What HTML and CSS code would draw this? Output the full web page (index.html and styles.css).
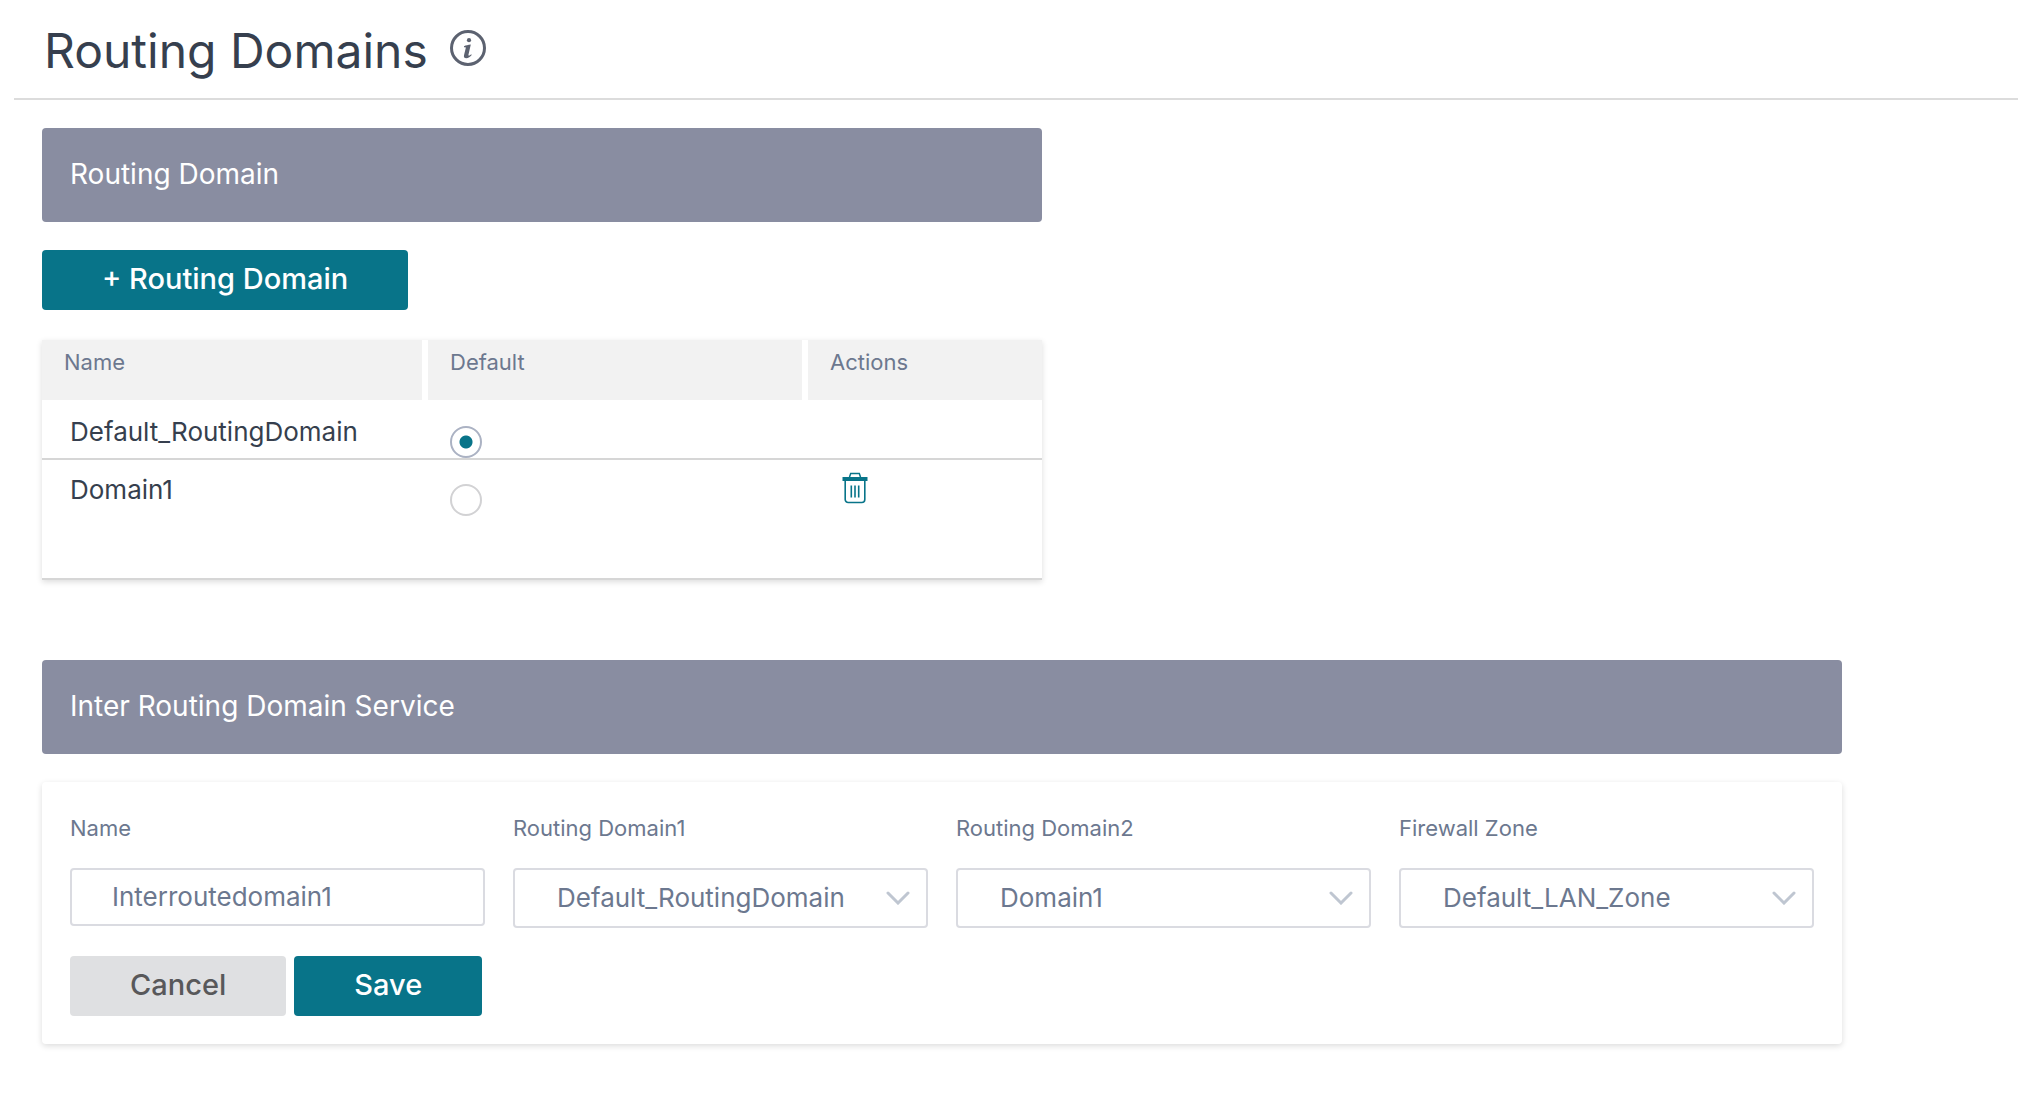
FILE: index.html
```html
<!DOCTYPE html>
<html lang="en">
<head>
  <meta charset="utf-8">
  <meta name="viewport" content="width=device-width, initial-scale=1">
  <title>Routing Domains</title>
  <link rel="stylesheet" href="styles.css">
</head>
<body>
  <header class="page-header">
    <h1 class="page-title">Routing Domains</h1>
    <svg class="info-icon" viewBox="0 0 36 36" role="img" aria-label="Information">
      <circle cx="18" cy="18" r="16.5" fill="none" stroke="currentColor" stroke-width="3"/>
      <circle cx="19" cy="10.2" r="2.1" fill="currentColor"/>
      <path d="M14 16.200c2-.7 4-1.200 6.800-1.600l-2.300 9.800c-.2.900 0 1.200.4 1.200.7 0 1.500-.6 2.300-1.300l.5.7c-1.500 1.900-3.400 3.200-5.400 3.200-2 0-2.700-1.200-2.300-3l1.700-7c.2-.8 0-1-.6-1h-1.100z" fill="currentColor"/>
    </svg>
  </header>

  <main class="content">
    <section class="domains">
      <h2 class="banner">Routing Domain</h2>
      <button type="button" class="btn btn-primary">+ Routing Domain</button>
      <div class="table-card">
        <table class="domain-table">
          <colgroup>
            <col class="col-name">
            <col class="col-default">
            <col>
          </colgroup>
          <thead>
            <tr><th scope="col">Name</th><th scope="col">Default</th><th scope="col">Actions</th></tr>
          </thead>
          <tbody>
            <tr>
              <td class="cell-name">Default_RoutingDomain</td>
              <td class="cell-radio"><input class="radio" type="radio" name="default-domain" aria-label="Default_RoutingDomain" checked></td>
              <td></td>
            </tr>
            <tr>
              <td class="cell-name">Domain1</td>
              <td class="cell-radio"><input class="radio" type="radio" name="default-domain" aria-label="Domain1"></td>
              <td class="cell-actions">
                <button type="button" class="icon-btn" aria-label="Delete Domain1">
                  <svg class="trash-icon" viewBox="0 0 26 32">
                    <path d="M7.500 5l1.200-3.500h8.600L18.500 5" fill="none" stroke="currentColor" stroke-width="1.500"/>
                    <path d="M.5 5h25v4h-25z" fill="currentColor"/>
                    <path d="M3.200 8v19.500a3 3 0 0 0 3 3h13.600a3 3 0 0 0 3-3V8M9.300 13.500v12M13 13.500v12M16.700 13.500v12" fill="none" stroke="currentColor" stroke-width="1.600"/>
                  </svg>
                </button>
              </td>
            </tr>
          </tbody>
        </table>
      </div>
    </section>

    <section class="service">
      <h2 class="banner">Inter Routing Domain Service</h2>
      <form class="form-card">
        <div class="fields">
          <div class="field">
            <label for="name">Name</label>
            <input class="control text-control" id="name" type="text" value="Interroutedomain1">
          </div>
          <div class="field">
            <label for="domain1">Routing Domain1</label>
            <div class="select">
              <select class="control" id="domain1"><option>Default_RoutingDomain</option><option>Domain1</option></select>
              <svg class="chevron" viewBox="0 0 24 14"><path d="M2 2l10 10L22 2"/></svg>
            </div>
          </div>
          <div class="field">
            <label for="domain2">Routing Domain2</label>
            <div class="select">
              <select class="control" id="domain2"><option>Domain1</option><option>Default_RoutingDomain</option></select>
              <svg class="chevron" viewBox="0 0 24 14"><path d="M2 2l10 10L22 2"/></svg>
            </div>
          </div>
          <div class="field">
            <label for="zone">Firewall Zone</label>
            <div class="select">
              <select class="control" id="zone"><option>Default_LAN_Zone</option></select>
              <svg class="chevron" viewBox="0 0 24 14"><path d="M2 2l10 10L22 2"/></svg>
            </div>
          </div>
        </div>
        <div class="form-actions">
          <button type="button" class="btn btn-secondary">Cancel</button>
          <button type="button" class="btn btn-primary">Save</button>
        </div>
      </form>
    </section>
  </main>
</body>
</html>
```
FILE: styles.css
```css
*,
*::before,
*::after {
  box-sizing: border-box;
}

body {
  margin: 0;
  background: #fff;
  color: #363f4e;
  font-family: Inter, "Liberation Sans", sans-serif;
}

h1,
h2 {
  margin: 0;
}

button,
input,
select {
  margin: 0;
  font: inherit;
}

.page-header {
  display: flex;
  align-items: flex-start;
  gap: 22px;
  height: 100px;
  margin-left: 14px;
  padding: 22px 30px 0;
  border-bottom: 2px solid #dcdcdc;
}

.page-title {
  font-size: 48px;
  font-weight: 400;
  line-height: 58px;
}

.info-icon {
  width: 36px;
  height: 36px;
  margin-top: 8px;
  color: #5c6270;
}

.content {
  display: flex;
  flex-direction: column;
  gap: 80px;
  padding: 28px 176px 64px 42px;
}

.domains {
  width: calc(100% * 5 / 9);
}

.banner {
  margin-bottom: 28px;
  padding: 29px 28px 31px;
  border-radius: 4px;
  background: #898da1;
  color: #fff;
  font-size: 28px;
  font-weight: 400;
  line-height: 34px;
}

.btn {
  height: 60px;
  padding: 0 60px 2px;
  border: 0;
  border-radius: 4px;
  font-size: 29px;
  font-weight: 500;
  line-height: 58px;
}

.btn-primary {
  background: #087489;
  color: #fff;
}

.btn-secondary {
  background: #dfe0e2;
  color: #58585a;
}

.table-card {
  margin-top: 30px;
  padding-bottom: 62px;
  border-bottom: 2px solid #d6d6d6;
  box-shadow: 0 2px 6px rgba(0, 0, 0, 0.14);
}

.domain-table {
  width: 100%;
  border-spacing: 0;
  table-layout: fixed;
}

.col-name {
  width: 38.6%;
}

.col-default {
  width: 38%;
}

.domain-table th {
  height: 60px;
  padding: 8px 22px 0;
  border-right: 6px solid #fff;
  background: #f2f2f2;
  color: #6c788f;
  font-size: 22px;
  font-weight: 400;
  line-height: 28px;
  text-align: left;
  vertical-align: top;
}

.domain-table th:last-child {
  border-right: 0;
}

.domain-table td {
  height: 58px;
  padding: 0;
  border-top: 2px solid transparent;
  font-size: 26px;
  line-height: 32px;
  vertical-align: top;
}

.domain-table tr + tr td {
  border-top-color: #d6d6d6;
}

.domain-table .cell-name {
  padding: 14px 28px 0;
}

.domain-table .cell-radio {
  padding: 24px 22px 0;
}

.domain-table .cell-actions {
  padding: 12px 34px 0;
}

.radio {
  display: block;
  width: 32px;
  height: 32px;
  border: 2px solid #d2d2d4;
  border-radius: 50%;
  background: #fff;
  appearance: none;
}

.radio:checked {
  border-color: #abb2c3;
  background: radial-gradient(circle, #087489 6px, #fff 7px);
}

.icon-btn {
  display: block;
  padding: 0;
  border: 0;
  background: none;
  color: #087489;
}

.trash-icon {
  display: block;
  width: 26px;
  height: 32px;
}

.form-card {
  display: flex;
  flex-direction: column;
  gap: 28px;
  padding: 28px;
  border-radius: 4px;
  box-shadow: 0 2px 6px rgba(0, 0, 0, 0.14);
}

.fields {
  display: grid;
  grid-template-columns: repeat(4, 1fr);
  gap: 28px;
}

.field {
  display: flex;
  flex-direction: column;
  gap: 24px;
}

.field label {
  padding-top: 2px;
  color: #6c788f;
  font-size: 22px;
  line-height: 32px;
}

.control {
  width: 100%;
  height: 60px;
  padding: 0 42px 2px;
  border: 2px solid #dadbe1;
  border-radius: 4px;
  background: #fff;
  color: #6c788f;
  font-size: 26px;
  appearance: none;
}

.text-control {
  height: 58px;
  padding: 0 40px 2px;
}

.select {
  display: grid;
  align-items: center;
}

.select > * {
  grid-area: 1 / 1;
}

.chevron {
  justify-self: end;
  width: 24px;
  height: 14px;
  margin-right: 18px;
  fill: none;
  stroke: #bfc6d1;
  stroke-width: 3;
  stroke-linecap: round;
  pointer-events: none;
}

.form-actions {
  display: flex;
  gap: 8px;
}
```
